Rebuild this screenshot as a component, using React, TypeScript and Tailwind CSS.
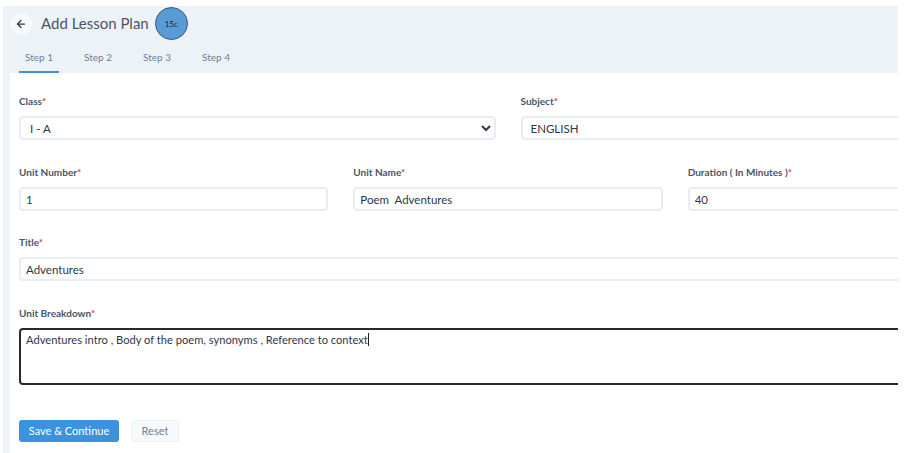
import React from 'react';
import { ArrowLeft } from 'lucide-react';

const Label = ({ text }: { text: string }) => (
  <label className="block text-[10px] leading-[14px] font-bold text-[#4a5568] mb-[8px]">
    {text}
    <span className="text-[#e53e3e]">*</span>
  </label>
);

const inputClass =
  'block w-full h-[24px] pl-[5px] pr-[3px] text-[11.5px] text-[#2d3748] bg-white border-2 border-[#e7edf3] rounded-[4px] outline-none';

const Field = ({ label, value, className = '' }: { label: string; value: string; className?: string }) => (
  <div>
    <Label text={label} />
    <input className={`${inputClass} ${className}`} defaultValue={value} />
  </div>
);

export default function App() {
  const steps = ['Step 1', 'Step 2', 'Step 3', 'Step 4'];

  return (
    <div className="w-[904px] h-[453px] overflow-hidden bg-white pt-[6px] pl-[3px] pr-[6px] font-['Lato',sans-serif]">
      <div className="h-full flex flex-col bg-[#edf2f7] overflow-hidden">
        <div className="pl-[7px] pt-[1px] shrink-0">
          <div className="flex items-center h-[33px]">
            <button className="w-[22px] h-[22px] rounded-full bg-[#f7fafc] flex items-center justify-center text-[#2d3748]">
              <ArrowLeft size={12} strokeWidth={2.5} />
            </button>
            <h1 className="ml-[9px] text-[15px] font-normal text-[#4a5568]">Add Lesson Plan</h1>
            <div className="ml-[6px] w-[33px] h-[33px] rounded-full bg-[#5b9bd5] border border-[#2f5a86] flex items-center justify-center text-[8px] text-[#1a202c]">
              15c
            </div>
          </div>
          <div className="flex mt-[1px] ml-[9px] h-[32px]">
            {steps.map((step, i) => (
              <div
                key={step}
                className={`w-[40px] mr-[19px] pt-[9px] text-center text-[10px] text-[#718096] ${
                  i === 0 ? 'border-b-2 border-[#3b93e0]' : ''
                }`}
              >
                {step}
              </div>
            ))}
          </div>
        </div>
        <div className="flex-1 ml-[7px] bg-white overflow-hidden pl-[9px] pt-[21px]">
          <div className="w-[978px]">
            <div className="grid grid-cols-2 gap-x-[25px]">
              <div>
                <Label text="Class" />
                <select className={inputClass} defaultValue="I - A">
                  <option>I - A</option>
                </select>
              </div>
              <Field label="Subject" value="ENGLISH" className="pl-[8px]" />
            </div>
            <div className="grid grid-cols-3 gap-x-[25px] mt-[25px]">
              <Field label="Unit Number" value="1" />
              <Field label="Unit Name" value="Poem  Adventures" />
              <Field label="Duration ( In Minutes )" value="40" />
            </div>
            <div className="mt-[24px]">
              <Field label="Title" value="Adventures" />
            </div>
            <div className="mt-[25px] relative">
              <Label text="Unit Breakdown" />
              <textarea
                className="block w-full h-[57px] px-[5px] py-[2px] text-[11.15px] leading-[16px] text-[#2d3748] bg-white border-2 border-[#2a2a2a] rounded-[4px] outline-none resize-none"
                defaultValue="Adventures intro , Body of the poem, synonyms , Reference to context"
              />
              <span className="absolute left-[349px] top-[27px] w-px h-[13px] bg-[#1a202c]" />
            </div>
            <div className="flex mt-[35px]">
              <button className="w-[100px] h-[22px] rounded-[3px] bg-[#3b93e0] text-white text-[11px]">Save &amp; Continue</button>
              <button className="ml-[12px] w-[48px] h-[22px] rounded-[3px] bg-[#f7fafc] border border-[#edf2f7] text-[#718096] text-[11px]">Reset</button>
            </div>
          </div>
        </div>
      </div>
    </div>
  );
}
